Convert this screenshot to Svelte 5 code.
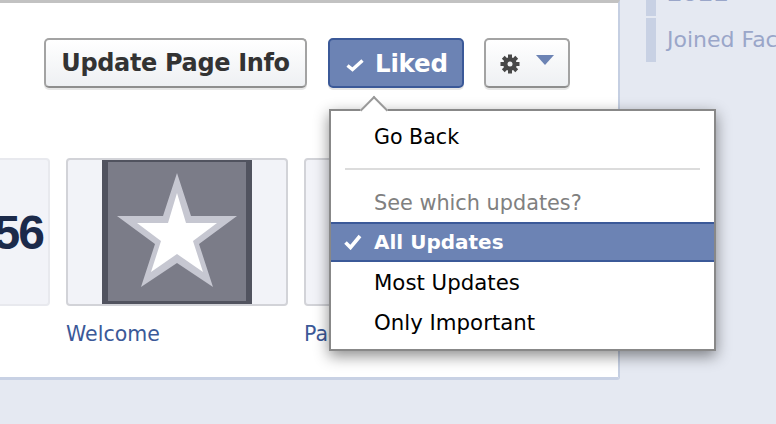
<script lang="ts">
  const tiles = [
    { label: '', kind: 'count' },
    { label: 'Welcome', kind: 'star' },
    { label: 'Page', kind: 'blank' }
  ];
  const updateOptions = [
    { label: 'All Updates', selected: true },
    { label: 'Most Updates', selected: false },
    { label: 'Only Important', selected: false }
  ];
</script>

<div class="page">
  <div class="panel">
    <div class="actions">
      <button class="btn info">Update Page Info</button>
      <button class="btn liked">
        <svg class="like-check" viewBox="0 0 18 14" width="18" height="14">
          <path d="M1.5 7.5 L6.5 11.5 L16.5 2.5" fill="none" stroke="#fff" stroke-width="3.4" />
        </svg>
        Liked
      </button>
      <button class="btn gear">
        <svg viewBox="0 0 20 20" width="20" height="20">
          <g fill="#484848">
            <circle cx="10" cy="10" r="6.8" />
            <rect x="8" y="0.5" width="4" height="19" />
            <rect x="0.5" y="8" width="19" height="4" />
            <rect x="8" y="0.5" width="4" height="19" transform="rotate(45 10 10)" />
            <rect x="8" y="0.5" width="4" height="19" transform="rotate(-45 10 10)" />
          </g>
          <circle cx="10" cy="10" r="2.5" fill="#f0f1f3" />
        </svg>
        <span class="caret"></span>
      </button>
    </div>

    <div class="tiles">
      {#each tiles as t}
        <div class="tile-col">
          <div class="tile">
            {#if t.kind === 'count'}
              <span class="count">3,456</span>
            {:else if t.kind === 'star'}
              <div class="star-img">
                <svg viewBox="0 0 150 148" width="150" height="148">
                  <rect width="150" height="148" fill="#51535f" />
                  <rect x="6" y="4" width="138" height="139" fill="#7b7c88" />
                  <polygon points="75,15 89,58 135,58 97,86 111,129 75,105 39,129 53,86 15,58 61,58" fill="#c6c7d1" />
                  <polygon points="75,35 84,65 115,65 91,83 101,114 75,96 49,114 59,83 35,65 66,65" fill="#fff" />
                </svg>
              </div>
            {/if}
          </div>
          <div class="tile-label">{t.label}</div>
        </div>
      {/each}
    </div>

    <div class="menu">
      <span class="nub"></span>
      <div class="item back">Go Back</div>
      <div class="divider"></div>
      <div class="item heading">See which updates?</div>
      {#each updateOptions as o}
        <div class="item" class:selected={o.selected}>
          {#if o.selected}
            <svg class="check" viewBox="0 0 18 16" width="18" height="16">
              <path d="M1.5 8.5 L6.5 13.5 L16 2" fill="none" stroke="#fff" stroke-width="3.6" />
            </svg>
          {/if}
          {o.label}
        </div>
      {/each}
    </div>
  </div>

  <div class="side">
    <div class="tick first"><span>2011</span></div>
    <div class="tick"><span>Joined Facebook</span></div>
  </div>
</div>

<style>
  :global(body) {
    margin: 0;
    background: #e5e9f2;
  }
  .page {
    display: flex;
    align-items: flex-start;
    width: 776px;
    height: 424px;
    overflow: hidden;
    font-family: "DejaVu Sans", sans-serif;
  }
  .panel {
    position: relative;
    flex: none;
    box-sizing: border-box;
    width: 620px;
    height: 380px;
    background: #fff;
    border-top: 3px solid #c2c2c2;
    border-right: 2px solid #c5cfe2;
    border-bottom: 3px solid #c8d1e4;
    border-bottom-right-radius: 3px;
  }
  .actions {
    display: flex;
    margin-top: 35px;
    margin-left: 44px;
    gap: 21px;
  }
  .btn {
    box-sizing: border-box;
    height: 50px;
    padding: 0;
    font: bold 24px "DejaVu Sans", sans-serif;
    color: #333;
    background: linear-gradient(#fff, #eef0f3);
    border: 2px solid #a3a3a3;
    border-bottom-color: #8e8e8e;
    border-radius: 5px;
    box-shadow: 0 2px 0 #e6e6e6;
    white-space: nowrap;
  }
  .info {
    width: 263px;
    letter-spacing: -0.35px;
  }
  .liked {
    display: flex;
    align-items: center;
    gap: 11px;
    width: 136px;
    padding-left: 16px;
    font-size: 24.5px;
    letter-spacing: -0.2px;
    color: #fff;
    background: #6c83b4;
    border-color: #3b5998;
  }
  .like-check {
    margin-top: 3px;
  }
  .gear {
    display: flex;
    align-items: center;
    gap: 16px;
    width: 86px;
    margin-left: -1px;
    padding-left: 14px;
  }
  .gear svg {
    margin-top: 2px;
  }
  .caret {
    width: 0;
    height: 0;
    margin-bottom: 6px;
    border-left: 9px solid transparent;
    border-right: 9px solid transparent;
    border-top: 10px solid #6c83b4;
  }
  .tiles {
    display: flex;
    gap: 16px;
    margin-top: 70px;
    margin-left: -172px;
  }
  .tile-col {
    flex: none;
    width: 222px;
  }
  .tile {
    box-sizing: border-box;
    display: flex;
    align-items: center;
    justify-content: flex-end;
    position: relative;
    height: 148px;
    background: #f2f3f8;
    border: 2px solid #d2d3d8;
    border-radius: 4px;
    overflow: hidden;
  }
  .tile-col:first-child .tile {
    border-color: #e8e9ee;
  }
  .count {
    padding-right: 5px;
    font: bold 48px "Liberation Sans", sans-serif;
    letter-spacing: -2px;
    color: #1c2a4a;
  }
  .star-img {
    position: absolute;
    left: 34px;
    top: -2px;
    width: 150px;
    height: 148px;
  }
  .tile-label {
    margin-top: 15px;
    font-size: 20.5px;
    line-height: 26px;
    color: #3b5998;
  }
  .menu {
    position: absolute;
    left: 329px;
    top: 106px;
    box-sizing: border-box;
    width: 387px;
    height: 242px;
    padding-top: 6px;
    background: #fff;
    border: 2px solid #888;
    box-shadow: 0 5px 14px rgba(0, 0, 0, 0.45);
  }
  .nub {
    position: absolute;
    left: 33px;
    top: -11px;
    width: 20px;
    height: 20px;
    background: #fff;
    border-top: 2px solid #999;
    border-left: 2px solid #999;
    transform: rotate(45deg);
    box-sizing: border-box;
  }
  .item {
    position: relative;
    box-sizing: border-box;
    height: 40px;
    padding-left: 43px;
    font-size: 21.3px;
    line-height: 40px;
    color: #000;
  }
  .back {
    font-size: 20.6px;
  }
  .divider {
    height: 2px;
    margin: 11px 14px 18px;
    background: #dcdcdc;
  }
  .heading {
    height: 30px;
    line-height: 30px;
    font-size: 20.8px;
    color: #808080;
  }
  .selected {
    margin-top: 4px;
    margin-bottom: 1px;
    font-size: 20px;
    font-weight: bold;
    color: #fff;
    background: #6c83b4;
    border-top: 2px solid #3b5998;
    border-bottom: 2px solid #3b5998;
    line-height: 36px;
  }
  .check {
    position: absolute;
    left: 13px;
    top: 10px;
  }
  .side {
    margin-left: 26px;
    margin-top: -24px;
  }
  .tick {
    width: 10px;
    height: 44px;
    margin-top: 2px;
    background: #c8d1e4;
    white-space: nowrap;
  }
  .tick span {
    display: block;
    padding-left: 21px;
    font-size: 22px;
    line-height: 44px;
    color: #9aa6c9;
  }
  .tick.first {
    margin-top: -4px;
  }
  .tick.first span {
    font-weight: bold;
  }
</style>
